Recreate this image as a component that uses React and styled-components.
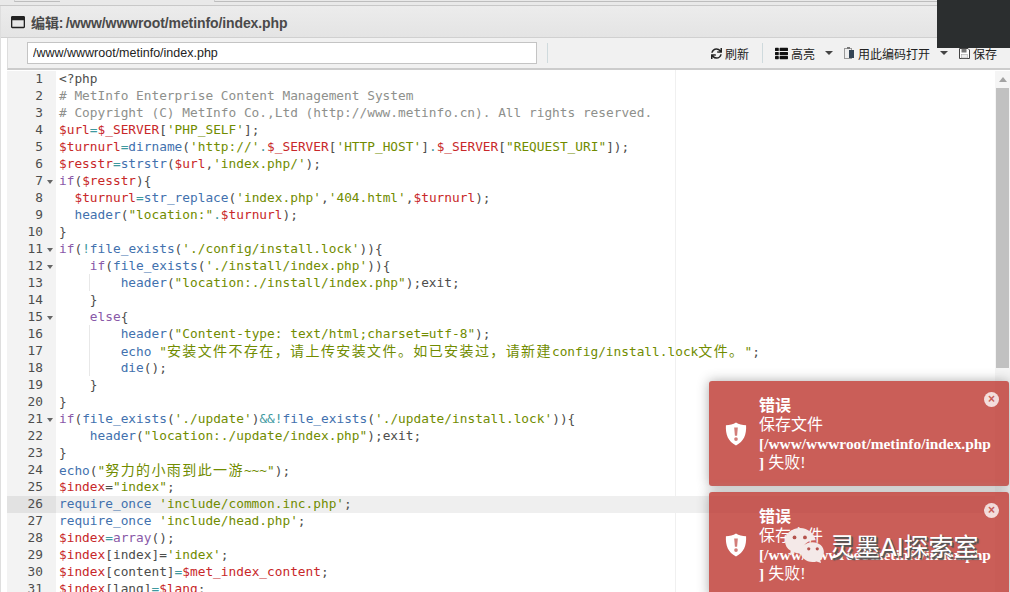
import React from "react";
import styled, { createGlobalStyle } from "styled-components";
import { FaSync, FaThList, FaRegWindowMaximize } from "react-icons/fa";

const SOURCE = `<?php
# MetInfo Enterprise Content Management System
# Copyright (C) MetInfo Co.,Ltd (http://www.metinfo.cn). All rights reserved.
$url=$_SERVER['PHP_SELF'];
$turnurl=dirname('http://'.$_SERVER['HTTP_HOST'].$_SERVER["REQUEST_URI"]);
$resstr=strstr($url,'index.php/');
if($resstr){
  $turnurl=str_replace('index.php','404.html',$turnurl);
  header("location:".$turnurl);
}
if(!file_exists('./config/install.lock')){
    if(file_exists('./install/index.php')){
        header("location:./install/index.php");exit;
    }
    else{
        header("Content-type: text/html;charset=utf-8");
        echo "安装文件不存在，请上传安装文件。如已安装过，请新建config/install.lock文件。";
        die();
    }
}
if(file_exists('./update')&&!file_exists('./update/install.lock')){
    header("location:./update/index.php");exit;
}
echo("努力的小雨到此一游~~~");
$index="index";
require_once 'include/common.inc.php';
require_once 'include/head.php';
$index=array();
$index[index]='index';
$index[content]=$met_index_content;
$index[lang]=$lang;`.split("\n");

const FOLDS = [7, 11, 12, 15, 21];
const ACTIVE_LINE = 26;
const TOKEN = /(#.*$|"[^"]*"|'[^']*'|\$\w+|\b(?:if|else|array)\b|\b(?:dirname|strstr|str_replace|file_exists|header|echo|require_once|die)\b|&&|[=!.](?![\w/]*['"]))/g;

const kindOf = (t) => {
  if (t[0] === "#") return "comment";
  if (t[0] === '"' || t[0] === "'") return "string";
  if (t[0] === "$") return "variable";
  if (/^(if|else|array)$/.test(t)) return "keyword";
  if (/^\w/.test(t)) return "func";
  return "operator";
};

const colors = {
  comment: "#8e908c",
  string: "#718c00",
  variable: "#c82829",
  keyword: "#8959a8",
  func: "#4271ae",
  operator: "#3e999f",
  plain: "#4d4d4c",
};

const withCjk = (text) =>
  text.split(/([\u3000-\u9fff\uff00-\uffef]+)/).map((part, i) =>
    i % 2 ? <Cjk key={i}>{part}</Cjk> : part
  );

const renderLine = (line) => {
  const parts = [];
  let code = line;
  if (/^ {8}/.test(line)) {
    parts.push(<Guide key="guide">{"    "}</Guide>);
    code = line.slice(4);
  }
  code.split(TOKEN).forEach((t, i) => {
    if (!t) return;
    const kind = i % 2 ? kindOf(t) : "plain";
    parts.push(<Token key={i} $kind={kind}>{withCjk(t)}</Token>);
  });
  return parts;
};

const Toast = () => (
  <ToastBox>
    <ToastIcon viewBox="0 0 24 26">
      <path
        fill="#fff"
        d="M12 0.5c3 2 7 3 11 3 0.6 10-2.5 18-11 22C3.500 21.500 0.400 13.500 1 3.500c4 0 8-1 11-3z"
      />
      <path fill="#c85f5a" d="M10 6h4l-0.800 9h-2.400zM12 16.500a2 2 0 1 1 0 4a2 2 0 0 1 0-4z" />
    </ToastIcon>
    <CloseDot>×</CloseDot>
    <ToastTitle>错误</ToastTitle>
    <ToastMessage>
      保存文件
      <br />
      <ToastPath>[/www/wwwroot/metinfo/index.php</ToastPath>
      <br />
      <ToastPath>]</ToastPath> 失败!
    </ToastMessage>
  </ToastBox>
);

const App = () => (
  <>
    <Global />
    <Page>
      <TopTabs>
        <TabEdge $width={14} />
        <TabEdge $width={46} $line />
        <TabEdge $width={154} />
        <TabEdge $width={723} $line />
      </TopTabs>
      <Dialog>
        <TitleBar>
          <FaRegWindowMaximize size={14} color="#222" />
          <Title>编辑: /www/wwwroot/metinfo/index.php</Title>
        </TitleBar>
        <Toolbar>
          <PathInput readOnly value="/www/wwwroot/metinfo/index.php" />
          <Separator $left={10} />
          <Spacer />
          <ToolButton><FaSync size={11} color="#222" />刷新</ToolButton>
          <Separator $left={13} />
          <ToolButton><FaThList size={13} color="#111" />高亮<Caret /></ToolButton>
          <ToolButton>
            <svg width="11" height="13" viewBox="0 0 11 13">
              <rect x="0.500" y="1.500" width="7" height="10" fill="#eee" stroke="#999" />
              <rect x="5" y="3" width="5" height="8" fill="#345" />
              <rect x="3" y="0" width="3" height="2" fill="#777" />
            </svg>
            用此编码打开<Caret />
          </ToolButton>
          <ToolButton>
            <svg width="11" height="11" viewBox="0 0 11 11">
              <path d="M0.500 0.500h8.500l1.500 1.500v8.500h-10z" fill="#fff" stroke="#444" />
              <rect x="2.500" y="1" width="5" height="3.500" fill="#777" />
              <rect x="2.500" y="6.500" width="6" height="3.500" fill="#eee" stroke="#999" strokeWidth="0.500" />
            </svg>
            保存
          </ToolButton>
        </Toolbar>
        <Editor>
          <Lines>
            <PrintMargin />
            {SOURCE.map((line, i) => (
              <Row key={i} $active={i + 1 === ACTIVE_LINE}>
                <Gutter $active={i + 1 === ACTIVE_LINE}>
                  {i + 1}
                  <FoldSlot>{FOLDS.includes(i + 1) && <Fold />}</FoldSlot>
                </Gutter>
                <Code>{renderLine(line)}</Code>
              </Row>
            ))}
          </Lines>
          <Scrollbar>
            <ArrowUp />
            <Thumb />
          </Scrollbar>
        </Editor>
      </Dialog>
      <BlackBox />
      <ToastStack>
        <Toast />
        <Toast />
      </ToastStack>
      <Watermark>
        <svg width="40" height="36" viewBox="0 0 42 38">
          <path
            fill="#f4e9e8"
            d="M17 1C8 1 1 7 1 15c0 4 2 8 6 10l-1 5 5-3c2 .6 4 1 6 1 1 0 1.500 0 2-.1C18.500 20 24 14 32 14c.5 0 1 0 1.400.1C32 7 25 1 17 1z"
          />
          <path
            fill="#f4e9e8"
            d="M30 16c-7 0-12.500 4.500-12.500 10.500S23 37 30 37c1.500 0 3-.2 4.300-.7L39 38l-1-4c2.500-2 4-4.500 4-7.500C42 20.500 37 16 30 16z"
          />
          <circle cx="11" cy="11" r="2" fill="#b5534e" />
          <circle cx="22" cy="11" r="2" fill="#b5534e" />
          <circle cx="26" cy="23" r="1.700" fill="#b5534e" />
          <circle cx="35" cy="23" r="1.700" fill="#b5534e" />
        </svg>
        <WatermarkText>灵墨AI探索室</WatermarkText>
      </Watermark>
    </Page>
  </>
);

export default App;

//styles
const Global = createGlobalStyle`
  html, body {
    margin: 0;
    padding: 0;
    background: #fff;
    overflow: hidden;
  }
`;

const Page = styled.div`
  position: relative;
  width: 1010px;
  height: 592px;
  overflow: hidden;
  font-family: "Liberation Sans", "Noto Sans CJK SC", sans-serif;
`;

const TopTabs = styled.div`
  display: flex;
  height: 6px;
  background: #e9e9e9;
  border-bottom: 1px solid #c8c8c8;
  box-sizing: border-box;
  flex: none;
`;

const TabEdge = styled.div`
  width: ${(p) => p.$width}px;
  height: 2px;
  box-sizing: border-box;
  border-bottom: ${(p) => (p.$line ? "1px solid #bdbdbd" : "none")};
  border-left: ${(p) => (p.$line ? "1px solid #cfcfcf" : "none")};
`;

const Dialog = styled.div`
  display: flex;
  flex-direction: column;
  height: 586px;
  border-left: 1px solid #dedede;
  box-sizing: border-box;
`;

const TitleBar = styled.div`
  display: flex;
  align-items: center;
  gap: 6px;
  height: 32px;
  padding: 0 0 0 10px;
  background: linear-gradient(#ececec, #e4e4e4);
  border-bottom: 1px solid #d0d0d0;
  box-sizing: border-box;
  flex: none;
`;

const Title = styled.div`
  font-size: 14px;
  font-weight: bold;
  letter-spacing: -0.1px;
  word-spacing: -1.5px;
  color: #4a4a4a;
`;

const Toolbar = styled.div`
  display: flex;
  align-items: center;
  height: 32px;
  margin-left: 6px;
  padding: 0 13px 0 19px;
  background: #f1f1f1;
  border-left: 1px solid #ddd;
  border-bottom: 2px solid #ccc;
  box-sizing: border-box;
  flex: none;
`;

const PathInput = styled.input`
  width: 510px;
  height: 22px;
  padding: 0 5px;
  box-sizing: border-box;
  border: 1px solid #c4c4c4;
  background: #fff;
  font: 12.5px "Liberation Sans", sans-serif;
  color: #222;
  outline: none;
`;

const Separator = styled.div`
  width: 1px;
  height: 20px;
  margin: 0 7px 0 ${(p) => p.$left}px;
  background: #cfdadd;
`;

const Spacer = styled.div`
  flex: 1;
`;

const ToolButton = styled.div`
  display: flex;
  align-items: center;
  gap: 3px;
  margin-left: 5px;
  font-size: 12px;
  color: #222;
  white-space: nowrap;
`;

const Caret = styled.span`
  width: 0;
  height: 0;
  margin-left: 7px;
  margin-right: 6px;
  border-left: 4px solid transparent;
  border-right: 4px solid transparent;
  border-top: 4px solid #444;
`;

const Editor = styled.div`
  display: flex;
  flex: 1;
  min-height: 0;
  margin-left: 6px;
  padding-top: 1px;
  background: #fff;
  overflow: hidden;
`;

const Lines = styled.div`
  position: relative;
  flex: 1;
  min-width: 0;
`;

const PrintMargin = styled.div`
  position: absolute;
  left: 668px;
  top: -1px;
  bottom: 0;
  width: 1px;
  background: #f0f0f0;
`;

const Row = styled.div`
  position: relative;
  display: flex;
  height: 17px;
  background: ${(p) => (p.$active ? "#efefef" : "transparent")};
`;

const Gutter = styled.div`
  display: flex;
  justify-content: flex-end;
  flex: none;
  width: 49px;
  background: ${(p) => (p.$active ? "#e2e2e2" : "#f3f3f3")};
  color: #4d4d4c;
  font: 12.8px/15px "DejaVu Sans Mono", monospace;
`;

const FoldSlot = styled.span`
  display: flex;
  align-items: center;
  justify-content: center;
  width: 13px;
`;

const Fold = styled.span`
  width: 0;
  height: 0;
  border-left: 3px solid transparent;
  border-right: 3px solid transparent;
  border-top: 4px solid #666;
`;

const Code = styled.div`
  flex: 1;
  margin-top: -1px;
  padding-left: 3px;
  font: 12.8px/17px "DejaVu Sans Mono", "Noto Sans CJK SC", monospace;
  white-space: pre;
  color: #4d4d4c;
`;

const Token = styled.span`
  color: ${(p) => colors[p.$kind]};
`;

const Guide = styled.span`
  box-shadow: inset -1px 0 0 #e8e8e8;
  display: inline-block;
  height: 17px;
  vertical-align: top;
`;

const Cjk = styled.span`
  font-family: "Noto Sans CJK SC", sans-serif;
  font-size: 14px;
  letter-spacing: 1.4px;
`;

const Scrollbar = styled.div`
  display: flex;
  flex-direction: column;
  align-items: center;
  flex: none;
  width: 15px;
  padding-top: 6px;
  background: #f5f5f5;
  box-sizing: border-box;
`;

const ArrowUp = styled.span`
  width: 0;
  height: 0;
  margin-bottom: 6px;
  border-left: 4px solid transparent;
  border-right: 4px solid transparent;
  border-bottom: 5px solid #a3a3a3;
`;

const Thumb = styled.div`
  width: 13px;
  height: 280px;
  background: #c1c1c1;
`;

const BlackBox = styled.div`
  position: absolute;
  top: 0;
  right: 0;
  width: 73px;
  height: 48px;
  background: #2b2e2f;
`;

const ToastStack = styled.div`
  position: absolute;
  top: 381px;
  right: 1px;
  width: 300px;
  display: flex;
  flex-direction: column;
  gap: 6px;
`;

const ToastBox = styled.div`
  position: relative;
  box-sizing: border-box;
  width: 300px;
  height: 105px;
  padding: 15px 15px 15px 50px;
  flex: none;
  border-radius: 3px;
  background: #bd362f;
  opacity: 0.8;
  box-shadow: 0 0 12px #999;
  color: #fff;
  font-family: "Liberation Serif", "Noto Sans CJK SC", serif;
  font-size: 16px;
  line-height: 19px;
`;

const ToastIcon = styled.svg`
  position: absolute;
  left: 16px;
  top: 41px;
  width: 22px;
  height: 24px;
`;

const CloseDot = styled.span`
  position: absolute;
  top: 11px;
  right: 10px;
  width: 15px;
  height: 15px;
  border-radius: 50%;
  background: rgba(255, 255, 255, 0.8);
  color: #bd362f;
  font: bold 12px/15px "Liberation Sans", sans-serif;
  text-align: center;
`;

const ToastTitle = styled.div`
  font-weight: bold;
`;

const ToastMessage = styled.div`
  white-space: nowrap;
`;

const ToastPath = styled.span`
  font-size: 15.4px;
  font-weight: bold;
`;

const Watermark = styled.div`
  position: absolute;
  left: 784px;
  top: 527px;
  display: flex;
  align-items: center;
  gap: 6px;
`;

const WatermarkText = styled.div`
  font-size: 25px;
  color: #fff;
  text-shadow: 1px 1px 0 #555, 2px 2px 1px #555;
  white-space: nowrap;
`;
